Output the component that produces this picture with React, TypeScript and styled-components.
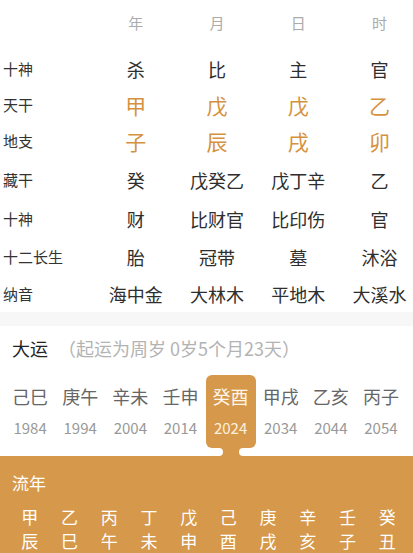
import React from "react";
import styled, { createGlobalStyle } from "styled-components";

const ORANGE = "#D6984A";
const ORANGE_TEXT = "#D4923F";

const GlobalStyle = createGlobalStyle`
  html, body {
    margin: 0;
    padding: 0;
    background: #ffffff;
    font-family: "Noto Sans CJK SC", "Noto Sans", sans-serif;
  }
`;

const Page = styled.div`
  width: 413px;
  height: 553px;
  overflow: hidden;
  background: #ffffff;
  display: flex;
  flex-direction: column;
`;

const Table = styled.div`
  display: flex;
  flex-direction: column;
`;

const Row = styled.div<{ $h: number; $mt?: number }>`
  display: grid;
  grid-template-columns: 95px repeat(4, 81.3px);
  align-items: center;
  height: ${(p) => p.$h}px;
  margin-top: ${(p) => p.$mt ?? 0}px;
`;

const Label = styled.div`
  padding-left: 3px;
  font-size: 15px;
  color: #333333;
  line-height: 22px;
`;

const HeaderCell = styled.div`
  text-align: center;
  font-size: 15px;
  color: #ababab;
  line-height: 22px;
`;

const Cell = styled.div<{ $accent?: boolean }>`
  text-align: center;
  white-space: nowrap;
  font-size: ${(p) => (p.$accent ? 21 : 18)}px;
  line-height: 26px;
  color: ${(p) => (p.$accent ? ORANGE_TEXT : "#2e2e2e")};
`;

const Divider = styled.div`
  height: 16px;
  background: #f7f7f7;
`;

const DayunSection = styled.div`
  padding: 10px 0 8px;
  display: flex;
  flex-direction: column;
`;

const TitleRow = styled.div`
  display: flex;
  align-items: center;
  padding-left: 12px;
  height: 24px;
`;

const Title = styled.div<{ $light?: boolean }>`
  font-size: ${(p) => (p.$light ? 17 : 18)}px;
  line-height: 24px;
  color: ${(p) => (p.$light ? "#ffffff" : "#222222")};
`;

const Sub = styled.div`
  margin-left: 10px;
  font-size: 18px;
  line-height: 24px;
  color: #b3b3b3;
  white-space: nowrap;
`;

const DayunList = styled.div`
  margin-top: 15px;
  display: grid;
  grid-template-columns: repeat(8, 1fr);
  padding: 0 7px 0 5px;
`;

const DayunItem = styled.div<{ $active?: boolean }>`
  position: relative;
  display: flex;
  flex-direction: column;
  align-items: center;
  padding: 8px 0 9px;
  border-radius: 6px;
  background: ${(p) => (p.$active ? ORANGE : "transparent")};
`;

const Ganzhi = styled.div<{ $active?: boolean }>`
  font-size: 18px;
  line-height: 26px;
  white-space: nowrap;
  color: ${(p) => (p.$active ? "#fff6ea" : "#666666")};
`;

const Year = styled.div<{ $active?: boolean }>`
  margin-top: 8px;
  font-size: 15px;
  line-height: 22px;
  color: ${(p) => (p.$active ? "#fff1de" : "#999999")};
`;

const Connector = styled.svg`
  position: absolute;
  top: 100%;
  left: 50%;
  transform: translateX(-50%);
  width: 50px;
  height: 8px;
  display: block;
`;

const LiunianBand = styled.div`
  flex: 1;
  background: ${ORANGE};
  padding-top: 15px;
  display: flex;
  flex-direction: column;
`;

const LiunianGrid = styled.div`
  margin-top: 10px;
  display: grid;
  grid-template-columns: repeat(10, 1fr);
  padding: 0 6px 0 10px;
`;

const LiunianCell = styled.div`
  display: flex;
  flex-direction: column;
  align-items: center;
  font-size: 17px;
  line-height: 24px;
  color: #ffffff;
`;

const rows: { label: string; values: string[]; accent?: boolean; h: number }[] = [
  { label: "十神", values: ["杀", "比", "主", "官"], h: 38 },
  { label: "天干", values: ["甲", "戊", "戊", "乙"], accent: true, h: 34 },
  { label: "地支", values: ["子", "辰", "戌", "卯"], accent: true, h: 38 },
  { label: "藏干", values: ["癸", "戊癸乙", "戊丁辛", "乙"], h: 40 },
  { label: "十神", values: ["财", "比财官", "比印伤", "官"], h: 38 },
  { label: "十二长生", values: ["胎", "冠带", "墓", "沐浴"], h: 38 },
  { label: "纳音", values: ["海中金", "大林木", "平地木", "大溪水"], h: 36 },
];

const dayun = [
  ["己巳", "1984"],
  ["庚午", "1994"],
  ["辛未", "2004"],
  ["壬申", "2014"],
  ["癸酉", "2024"],
  ["甲戌", "2034"],
  ["乙亥", "2044"],
  ["丙子", "2054"],
];

const liunian = ["甲辰", "乙巳", "丙午", "丁未", "戊申", "己酉", "庚戌", "辛亥", "壬子", "癸丑"];

export default function App() {
  return (
    <Page>
      <GlobalStyle />
      <Table>
        <Row $h={46}>
          <span />
          {["年", "月", "日", "时"].map((t) => (
            <HeaderCell key={t}>{t}</HeaderCell>
          ))}
        </Row>
        {rows.map((r, i) => (
          <Row key={i} $h={r.h} $mt={i === 0 ? 4 : 0}>
            <Label>{r.label}</Label>
            {r.values.map((v, j) => (
              <Cell key={j} $accent={r.accent}>
                {v}
              </Cell>
            ))}
          </Row>
        ))}
      </Table>
      <Divider />
      <DayunSection>
        <TitleRow>
          <Title>大运</Title>
          <Sub>（起运为周岁 0岁5个月23天）</Sub>
        </TitleRow>
        <DayunList>
          {dayun.map(([gz, y], i) => {
            const active = i === 4;
            return (
              <DayunItem key={y} $active={active}>
                <Ganzhi $active={active}>{gz}</Ganzhi>
                <Year $active={active}>{y}</Year>
                {active && (
                  <Connector viewBox="0 0 50 8">
                    <path
                      d="M13 0 A4 4 0 0 1 17 4 A4 4 0 0 1 13 8 L37 8 A4 4 0 0 1 33 4 A4 4 0 0 1 37 0 Z"
                      fill={ORANGE}
                    />
                  </Connector>
                )}
              </DayunItem>
            );
          })}
        </DayunList>
      </DayunSection>
      <LiunianBand>
        <TitleRow>
          <Title $light>流年</Title>
        </TitleRow>
        <LiunianGrid>
          {liunian.map((p) => (
            <LiunianCell key={p}>
              <span>{p[0]}</span>
              <span>{p[1]}</span>
            </LiunianCell>
          ))}
        </LiunianGrid>
      </LiunianBand>
    </Page>
  );
}
